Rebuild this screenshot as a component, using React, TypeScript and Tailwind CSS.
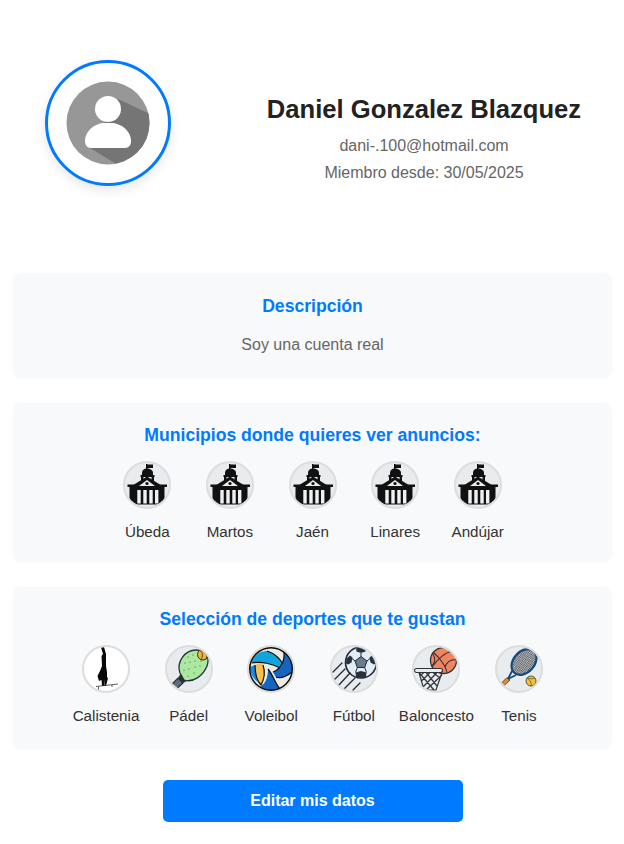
import React from "react";

const municipios = ["Úbeda", "Martos", "Jaén", "Linares", "Andújar"];

function Avatar() {
  return (
    <svg viewBox="0 0 84 84" className="w-[84px] h-[84px]">
      <defs>
        <clipPath id="av">
          <circle cx="42" cy="42" r="41.5" />
        </clipPath>
      </defs>
      <circle cx="42" cy="42" r="41.5" fill="#979797" />
      <path d="M52 18 L84 33 V84 H52 L24 67 Z" fill="#757575" clipPath="url(#av)" />
      <circle cx="42" cy="28" r="13" fill="#fff" />
      <path d="M19 60 C19 50 29 42 39 42 H45 C55 42 65 50 65 60 C65 64 63 67 59 67 H25 C21 67 19 64 19 60 Z" fill="#fff" />
    </svg>
  );
}

// los iconos usan coordenadas del circulo completo (48), el borde se queda fuera
function Ayuntamiento() {
  return (
    <svg viewBox="2 2 44 44" className="w-full h-full">
      <rect x="23" y="3" width="1.500" height="6" fill="#111" />
      <path d="M24 3.500 H30 V7 H24 Z" fill="#111" />
      <path d="M19 15 V12 C19 9 21 7.500 24 7.500 C27 7.500 30 9 30 12 V15 Z" fill="#111" />
      <path d="M17.500 14 H31.500 V16 H17.500 Z" fill="#111" />
      <path d="M18 16 H20.500 V20 H18 Z M28.500 16 H31 V20 H28.500 Z" fill="#111" />
      <path d="M24 15.500 L41 26 V29 H7 V26 Z" fill="#111" />
      <path d="M24 19 L32 25 H16 Z" fill="#e9ecef" />
      <circle cx="24" cy="22.500" r="1.600" fill="#111" />
      <path d="M4.500 23.500 H12 L9 25.500 V43.500 H6.500 V26 H4.500 Z M44 23.500 H36 L39 25.500 V43.500 H41.500 V26 H44 Z" fill="#111" />
      <rect x="9" y="27.500" width="30" height="16" fill="#111" />
      <rect x="14.300" y="29" width="3.400" height="13.500" fill="#f0f1f3" />
      <rect x="20.300" y="29" width="3.400" height="13.500" fill="#f0f1f3" />
      <rect x="26.300" y="29" width="3.400" height="13.500" fill="#f0f1f3" />
      <rect x="32" y="29" width="3.400" height="13.500" fill="#f0f1f3" />
    </svg>
  );
}

function Calistenia() {
  return (
    <svg viewBox="2 2 44 44" className="w-full h-full">
      <path d="M19 2.500 L22 2 L24 9 L24 21 L25 27 L25 33 L22.500 35 L22 41 L20 41 L19.500 35 L17 36 L15.500 31 L18 26 L20 21 L19.500 11 L21 9 Z" fill="#0a0a0a" />
      <path d="M22 30 L26 33 L24 41 L22.500 41 Z" fill="#0a0a0a" />
      <path d="M14 41.500 L36 39 M16.500 41.500 V45.500 M13.500 45.500 H18 M30 40 V42" stroke="#333" strokeWidth="0.800" fill="none" />
    </svg>
  );
}

function Padel() {
  return (
    <svg viewBox="2 2 44 44" className="w-full h-full">
      <path d="M6 40 L11 44.500 L18 38 L13 33 Z" fill="#5d6d7a" stroke="#263238" strokeWidth="1.200" />
      <path d="M13 33 L18 38 L24 35 L16 28 Z" fill="#263238" />
      <path d="M15 28 C11 17 20 5 31 5 C41 5 45 13 42 21 C38 31 28 38 19 35 Z" fill="#abe8a0" stroke="#263238" strokeWidth="1.300" />
      <g fill="#263238">
        <circle cx="23" cy="12" r="0.500" /><circle cx="28" cy="10" r="0.500" /><circle cx="33" cy="11" r="0.500" />
        <circle cx="20" cy="18" r="0.500" /><circle cx="25" cy="17" r="0.500" /><circle cx="30" cy="16" r="0.500" /><circle cx="36" cy="16" r="0.500" />
        <circle cx="19" cy="25" r="0.500" /><circle cx="24" cy="24" r="0.500" /><circle cx="30" cy="22" r="0.500" /><circle cx="35" cy="21" r="0.500" />
        <circle cx="23" cy="31" r="0.500" /><circle cx="29" cy="28" r="0.500" />
      </g>
      <circle cx="38" cy="9.500" r="5.500" fill="#f2b632" stroke="#263238" strokeWidth="1" />
      <path d="M35 5.500 C38 7 38 12 36 14.500 M40.500 5 C42 8 42 11 41 14" stroke="#263238" strokeWidth="0.800" fill="none" />
    </svg>
  );
}

function Voleibol() {
  return (
    <svg viewBox="2 2 44 44" className="w-full h-full">
      <circle cx="24" cy="24" r="23" fill="#ecebe6" />
      <path d="M5 16 C8 9 14 6 20 6 C26 8 32 12 36 19 L33 23 C26 19 14 16 5 18 Z" fill="#12a5dc" />
      <path d="M37 8 C42 12 45 18 45 25 C42 31 38 34 31 36 L26 27 C32 25 38 17 37 8 Z" fill="#1565c0" />
      <path d="M29 32 C34 34 40 31 45 27 C44 35 40 40 35 43 C32 40 30 36 29 32 Z" fill="#ecebe6" />
      <path d="M21 24 C26 30 28 38 33 44 C26 46 17 46 13 41 C18 40 21 33 21 24 Z" fill="#1565c0" />
      <path d="M3 22 C5 21 7 20 8 20 C9 27 9 33 11 37 C6 34 3 28 3 22 Z" fill="#1e88e5" />
      <path d="M8 20 C11 18 14 18 16 20 C18 26 18 33 14 40 C10 36 8 28 8 20 Z" fill="#f7bf4e" />
      <g stroke="#0b0b0b" strokeWidth="1.200" fill="none">
        <path d="M5 18 C14 16 26 19 33 23" />
        <path d="M8 20 C8 28 10 36 14 40" />
        <path d="M16 20 C18 26 18 33 14 40" />
        <path d="M21 24 C26 30 28 38 33 44" />
        <path d="M37 8 C38 17 32 25 26 27" />
        <path d="M29 32 C34 34 40 31 45 27" />
        <path d="M20 6 C26 8 32 12 36 19" />
      </g>
      <circle cx="24" cy="24" r="21.500" fill="none" stroke="#0b0b0b" strokeWidth="2" />
    </svg>
  );
}

function Futbol() {
  return (
    <svg viewBox="2 2 44 44" className="w-full h-full">
      <circle cx="31" cy="17.500" r="15.500" fill="#e3ecf5" stroke="#1f2933" strokeWidth="1.600" />
      <path d="M31 11.500 L37 16 L34.700 22.500 H27.300 L25 16 Z" fill="#6b7b8c" stroke="#1f2933" strokeWidth="1" />
      <path d="M26 3.500 L31 2 L36 3.500 L35.500 6.500 L31 8 L26.500 6.500 Z M16.500 13.500 L20 10.500 L22.500 12.500 L21.500 17.500 L18 19.500 L16 18.500 Z M45.500 13.500 L42 10.500 L39.500 12.500 L40.500 17.500 L44 19.500 L46 18.500 Z M25.500 27.500 L31 26 L36.500 27.500 L36 32 L31 33 L26 32 Z" fill="#27323c" />
      <path d="M31 8 V11.500 M25 16 L22 13.500 M37 16 L40 13.500 M27.300 22.500 L25.500 27.500 M34.700 22.500 L36.500 27.500" stroke="#1f2933" strokeWidth="1" />
      <path d="M3 27 L12 18 M3 36 L15 24 M8 41 L20 28 M14 44 L25 33 M23 45 L30 38" stroke="#1f2933" strokeWidth="1.300" strokeLinecap="round" />
    </svg>
  );
}

function Baloncesto() {
  return (
    <svg viewBox="2 2 44 44" className="w-full h-full">
      <circle cx="31.500" cy="15.500" r="13" fill="#f2855e" stroke="#30343a" strokeWidth="1.300" />
      <path d="M21 7 C27 12 34 21 35 28 M41 7 C35 5 25 15 20 22 M21 9 C24 14 23 19 19 21 M44 15 C39 14 35 17 33 22" stroke="#30343a" strokeWidth="1.100" fill="none" />
      <rect x="2.500" y="23.500" width="28" height="4" rx="2" fill="#e9ecef" stroke="#30343a" strokeWidth="1.200" />
      <path d="M7 27.500 L12 45 H24 L30 27.500 M7 27.500 L22 45 M14 27.500 L25 41 M21 27.500 L28 33 M12 27.500 L7.500 31 M18 27.500 L9.500 36 M25 27.500 L11 42 M30 30 L14 45" stroke="#30343a" strokeWidth="1.200" fill="none" />
    </svg>
  );
}

function Tenis() {
  return (
    <svg viewBox="2 2 44 44" className="w-full h-full">
      <defs>
        <pattern id="malla" width="2.400" height="2.400" patternUnits="userSpaceOnUse" patternTransform="rotate(40)">
          <rect width="2.400" height="2.400" fill="#d8dadc" />
          <rect width="1.200" height="1.200" fill="#3f4348" />
          <rect x="1.200" y="1.200" width="1.200" height="1.200" fill="#3f4348" />
        </pattern>
      </defs>
      <path d="M8.500 41 L6 38.500 L12 32.500 L15 35 Z" fill="#e88a2e" stroke="#30343a" strokeWidth="0.800" />
      <path d="M13 34 L21 30 M13 34 L17 26" stroke="#154a7d" strokeWidth="1.800" />
      <ellipse cx="29" cy="17" rx="10.500" ry="14.500" transform="rotate(42 29 17)" fill="url(#malla)" stroke="#154a7d" strokeWidth="2.200" />
      <circle cx="36" cy="36" r="5" fill="#f4c531" stroke="#30343a" strokeWidth="0.800" />
      <path d="M32 33 C35 35 37 38 36 41 M40 33 C38 34 35 34 33 33" stroke="#30343a" strokeWidth="0.600" fill="none" />
    </svg>
  );
}

const deportes: { nombre: string; icono: React.ReactNode; fondo: string }[] = [
  { nombre: "Calistenia", icono: <Calistenia />, fondo: "bg-white" },
  { nombre: "Pádel", icono: <Padel />, fondo: "bg-[#e9ecef]" },
  { nombre: "Voleibol", icono: <Voleibol />, fondo: "bg-[#e9ecef]" },
  { nombre: "Fútbol", icono: <Futbol />, fondo: "bg-[#e9ecef]" },
  { nombre: "Baloncesto", icono: <Baloncesto />, fondo: "bg-[#e9ecef]" },
  { nombre: "Tenis", icono: <Tenis />, fondo: "bg-[#e9ecef]" },
];

function Item({ nombre, icono, fondo = "bg-[#e9ecef]" }: { nombre: string; icono: React.ReactNode; fondo?: string }) {
  return (
    <div className="w-[82.6px] flex flex-col items-center">
      <div className={`w-12 h-12 rounded-full border-2 border-[#dddddd] overflow-hidden ${fondo}`}>
        {icono}
      </div>
      <span className="mt-[14px] text-[15.2px] leading-[18px] whitespace-nowrap text-[#333333]">{nombre}</span>
    </div>
  );
}

export default function App() {
  return (
    <div className="w-[624px] h-[844px] bg-white pl-[13px] pr-3 font-['Liberation_Sans',Arial,sans-serif]">
      <header className="h-[273px] pl-8 pt-[60px] flex items-start">
        <div className="w-[126px] h-[126px] shrink-0 rounded-full border-[3px] border-[#007bff] flex items-center justify-center shadow-[0_4px_12px_rgba(0,0,0,0.1)]">
          <Avatar />
        </div>
        <div className="flex-1 ml-[65px] pt-[34px] text-center">
          <h1 className="text-[25.6px] leading-[30px] font-bold text-[#222222]">Daniel Gonzalez Blazquez</h1>
          <p className="mt-[13px] text-base leading-[18px] text-[#666666]">dani-.100@hotmail.com</p>
          <p className="mt-[9px] text-base leading-[18px] text-[#666666]">Miembro desde: 30/05/2025</p>
        </div>
      </header>

      <section className="h-[105px] rounded-lg bg-[#f8f9fa] pt-[23px] text-center shadow-[0_1px_4px_rgba(0,0,0,0.02)]">
        <h2 className="text-[17.6px] leading-5 font-bold text-[#007bff]">Descripción</h2>
        <p className="mt-5 text-base leading-[18px] text-[#666666]">Soy una cuenta real</p>
      </section>

      <section className="mt-[25px] h-[159px] rounded-lg bg-[#f8f9fa] pt-[22px] text-center shadow-[0_1px_4px_rgba(0,0,0,0.02)]">
        <h2 className="text-[17.6px] leading-5 font-bold text-[#007bff]">Municipios donde quieres ver anuncios:</h2>
        <div className="mt-4 flex justify-center">
          {municipios.map((m) => (
            <Item key={m} nombre={m} icono={<Ayuntamiento />} />
          ))}
        </div>
      </section>

      <section className="mt-[25px] h-[162px] rounded-lg bg-[#f8f9fa] pt-[22px] text-center shadow-[0_1px_4px_rgba(0,0,0,0.02)]">
        <h2 className="text-[17.6px] leading-5 font-bold text-[#007bff]">Selección de deportes que te gustan</h2>
        <div className="mt-4 flex justify-center">
          {deportes.map((d) => (
            <Item key={d.nombre} nombre={d.nombre} icono={d.icono} fondo={d.fondo} />
          ))}
        </div>
      </section>

      <div className="mt-[31px] flex justify-center">
        <button className="w-[300px] h-[42px] rounded-[5px] bg-[#007bff] text-base font-bold text-white">Editar mis datos</button>
      </div>
    </div>
  );
}
